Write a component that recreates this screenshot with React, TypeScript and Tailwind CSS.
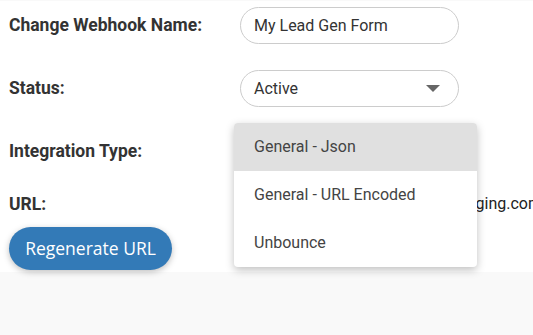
const options = ["General - Json", "General - URL Encoded", "Unbounce"];

export default function App() {
  return (
    <div className="min-h-[335px] bg-[#f9f9f9] pt-px font-['Roboto',sans-serif] overflow-hidden">
      <div className="relative bg-white pl-[9px] pt-[6px] h-[271px]">
        <div className="grid grid-cols-[231px_1fr] items-center gap-y-[26px]">
          <div className="text-[17.5px] font-bold text-[#333]">Change Webhook Name:</div>
          <div className="h-[37px] w-[219px] rounded-full border border-[#ccc] px-[13px] flex items-center text-[16px] text-[#333]">
            My Lead Gen Form
          </div>

          <div className="text-[17.5px] font-bold text-[#333]">Status:</div>
          <div className="h-[37px] w-[219px] rounded-full border border-[#ccc] pl-[13px] pr-[18px] flex items-center justify-between text-[16px] text-[#333]">
            <span>Active</span>
            <span className="w-0 h-0 border-l-[7px] border-r-[7px] border-t-[7px] border-l-transparent border-r-transparent border-t-[#666]" />
          </div>

          <div className="text-[17.5px] font-bold text-[#333]">Integration Type:</div>
          <div className="h-[37px] w-[219px] rounded-full border border-[#ccc]" />
        </div>

        <div className="grid grid-cols-[231px_1fr] items-center mt-[21px] h-[24px]">
          <div className="text-[17.5px] font-bold text-[#333]">URL:</div>
          <div className="-ml-[2px] text-[16px] text-[#222] whitespace-nowrap">https://webhooks.leadgen-messaging.com/hooks/8f3a2</div>
        </div>

        <button className="mt-[12px] h-[43px] w-[163px] rounded-full bg-[#337ab7] text-white text-[17.5px] font-['Open_Sans',sans-serif] shadow-[0_2px_6px_rgba(0,0,0,0.25)]">
          Regenerate URL
        </button>

        <div className="absolute left-[234px] top-[122px] w-[243px] bg-white rounded-[4px] shadow-[0_3px_8px_rgba(0,0,0,0.25)] overflow-hidden">
          {options.map((o, i) => (
            <div
              key={o}
              className={`h-[48px] flex items-center pl-[20px] text-[16px] text-[#444] ${i === 0 ? "bg-[#e0e0e0]" : ""}`}
            >
              {o}
            </div>
          ))}
        </div>
      </div>
    </div>
  );
}
